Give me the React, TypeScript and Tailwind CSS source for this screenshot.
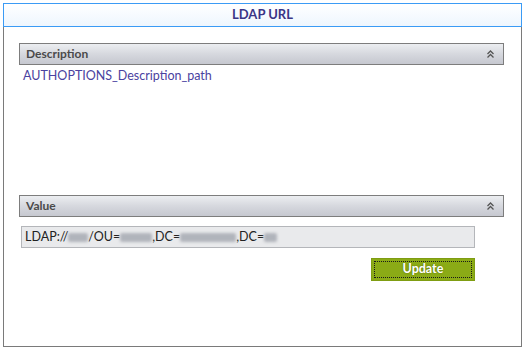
import React from "react";

function Chevrons() {
  return (
    <svg width="7" height="8" viewBox="0 0 7 8" className="block">
      <path d="M0.5 4 L3.5 1 L6.5 4" fill="none" stroke="#555" strokeWidth="1.3" />
      <path d="M0.5 7.5 L3.5 4.5 L6.5 7.5" fill="none" stroke="#555" strokeWidth="1.3" />
    </svg>
  );
}

function SectionHeader({ title }: { title: string }) {
  return (
    <div className="flex h-[22px] w-[485px] items-center justify-between border border-[#7d7d7d] bg-gradient-to-b from-[#eceef1] via-[#d6d8de] to-[#c6c8d0] pl-[6px] pr-[9px]">
      <span className="text-[12px] font-bold leading-none text-[#4a4a4a]">{title}</span>
      <Chevrons />
    </div>
  );
}

function Blur({ w }: { w: number }) {
  return (
    <span
      className="inline-block h-[9px] rounded-[2px] bg-[#b0b4bb] blur-[1.5px]"
      style={{ width: w }}
    />
  );
}

export default function App() {
  return (
    <div
      className="h-[349px] w-[526px] bg-white p-[3px]"
      style={{ fontFamily: 'Lato, "Liberation Sans", Arial, sans-serif' }}
    >
      <div className="flex h-[344px] w-[519px] flex-col">
        <div className="flex h-[24px] items-center justify-center border border-[#3b9bf5] bg-gradient-to-b from-[#ffffff] to-[#eef6fe]">
          <span className="text-[13px] font-bold text-[#3b3586]">LDAP URL</span>
        </div>
        <div className="flex flex-1 flex-col border-x border-b border-[#7a7a7a] pl-[15px]">
          <div className="mt-[16px]">
            <SectionHeader title="Description" />
          </div>
          <div className="pl-[4px] pt-[3px] text-[12.5px] leading-[16px] text-[#4a42a0]">
            AUTHOPTIONS_Description_path
          </div>
          <div className="mt-[111px]">
            <SectionHeader title="Value" />
          </div>
          <div className="ml-[2px] mt-[9px] flex h-[22px] w-[454px] items-center border border-[#b4b6ba] bg-[#e9eaec] pl-[3px] text-[12.5px] text-[#222]">
            <span>LDAP://</span>
            <Blur w={20} />
            <span>/OU=</span>
            <Blur w={32} />
            <span>,DC=</span>
            <Blur w={56} />
            <span>,DC=</span>
            <Blur w={13} />
          </div>
          <div className="ml-[352px] mt-[10px] flex h-[23px] w-[104px] items-center justify-center border border-[#7f9d12] bg-[#8bab16] p-[2px]">
            <div className="flex h-full w-full items-center justify-center border border-dotted border-[#1a1a1a]">
              <span className="text-[12.5px] font-bold text-white [text-shadow:0_0_2px_#5a6e0a]">Update</span>
            </div>
          </div>
        </div>
      </div>
    </div>
  );
}
